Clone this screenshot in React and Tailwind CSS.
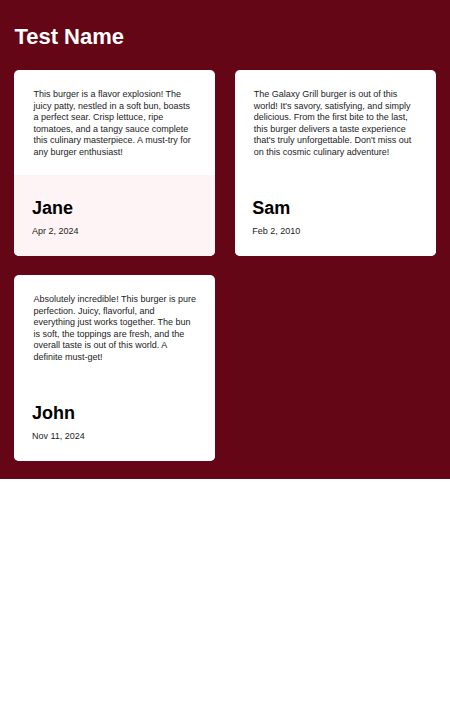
import React from 'react';

const reviews = [
  {
    name: 'Jane',
    date: 'Apr 2, 2024',
    text: 'This burger is a flavor explosion! The juicy patty, nestled in a soft bun, boasts a perfect sear. Crisp lettuce, ripe tomatoes, and a tangy sauce complete this culinary masterpiece. A must-try for any burger enthusiast!',
    active: true
  },
  {
    name: 'Sam',
    date: 'Feb 2, 2010',
    text: "The Galaxy Grill burger is out of this world! It's savory, satisfying, and simply delicious. From the first bite to the last, this burger delivers a taste experience that's truly unforgettable. Don't miss out on this cosmic culinary adventure!"
  },
  {
    name: 'John',
    date: 'Nov 11, 2024',
    text: 'Absolutely incredible! This burger is pure perfection. Juicy, flavorful, and everything just works together. The bun is soft, the toppings are fresh, and the overall taste is out of this world. A definite must-get!'
  }
];

const ReviewCard = ({ review }) => (
  <div className="flex flex-col overflow-hidden rounded-[5px] bg-white">
    <p className="px-[19.2px] pt-[19.2px] pb-[17px] text-[9px] leading-[11.5px] text-[#222]">
      {review.text}
    </p>
    {/* bottom block, first card is highlighted */}
    <div className={`px-[17.6px] pt-[20.2px] pb-[17px] ${review.active ? 'bg-[#fff4f5]' : 'bg-white'}`}>
      <h2 className="text-[18px] font-bold leading-[27px] text-black">{review.name}</h2>
      <div className="mt-[3px] text-[9px] leading-[13.5px] text-[#222]">{review.date}</div>
    </div>
  </div>
);

export default function App() {
  return (
    <div className="bg-[#650617] px-[14.4px] pt-[24px] pb-[18px] font-['Liberation_Sans',Arial,sans-serif]">
      <h1 className="mb-[21px] text-[22px] font-bold leading-[25px] text-white">Test Name</h1>
      <div className="grid grid-cols-2 gap-[19.2px]">
        {reviews.map(review => (
          <ReviewCard key={review.name} review={review} />
        ))}
      </div>
    </div>
  );
}
